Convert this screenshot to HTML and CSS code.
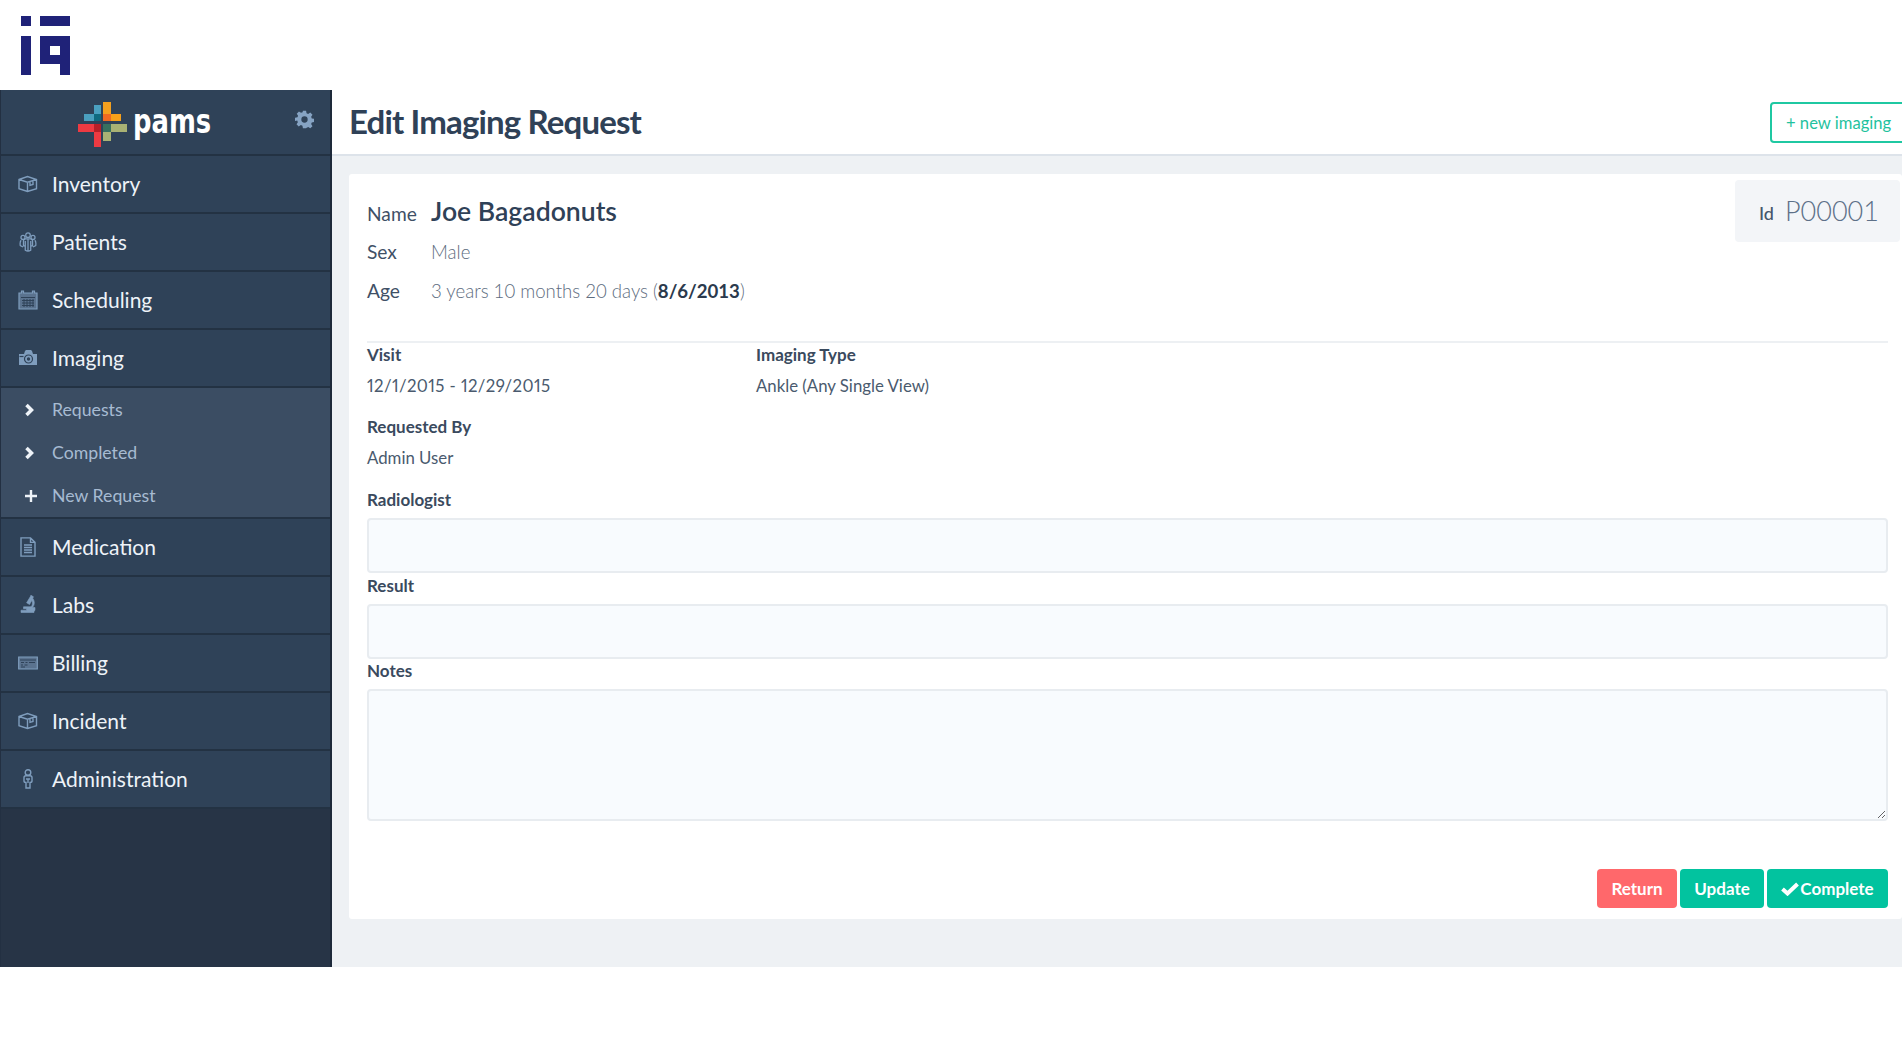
FILE: index.html
```html
<!DOCTYPE html>
<html lang="en">
<head>
<meta charset="utf-8">
<title>Edit Imaging Request</title>
<link rel="stylesheet" href="styles.css">
</head>
<body>
<header class="brandbar">
  <svg class="iq" viewBox="0 0 50 60" width="50" height="60" aria-label="iq"><path fill="#1f2278" d="M0 0h10v10H0zM19 0h30v10H19zM0 20h10v39H0zM19 20h30v39H39V48H19zM29 30v9h10v-9z" fill-rule="evenodd"/></svg>
</header>
<div class="app">
  <aside class="sidebar">
    <div class="sidebrand">
      <svg class="cross" viewBox="0 0 50 46" width="50" height="46">
        <rect x="25" y="0" width="8" height="12" fill="#f3a01f"/><rect x="25" y="12" width="8" height="7" fill="#ef6a22"/><rect x="33" y="12" width="10" height="7" fill="#f6a01a"/>
        <rect x="16" y="3" width="7" height="9" fill="#4aa0c0"/><rect x="6" y="12" width="10" height="7" fill="#4a9fbe"/><rect x="16" y="12" width="7" height="7" fill="#0f6a80"/>
        <rect x="0" y="22" width="16" height="8" fill="#ee3a42"/><rect x="16" y="22" width="7" height="8" fill="#b81f28"/><rect x="16" y="30" width="7" height="15" fill="#ee3a42"/>
        <rect x="25" y="22" width="8" height="8" fill="#37705f"/><rect x="33" y="22" width="16" height="8" fill="#a9b274"/><rect x="25" y="30" width="8" height="9" fill="#a9b274"/>
      </svg>
      <span class="wordmark">pams</span>
      <svg class="gear" viewBox="0 0 24 24" width="19" height="19"><path fill="#86a3c3" fill-rule="evenodd" d="M10 1h4l.6 3.100 2 .8 2.700-1.700 2.800 2.800-1.700 2.600.8 2 3.100.6v4l-3.100.6-.8 2 1.700 2.600-2.800 2.800-2.600-1.700-2 .8L14 23h-4l-.6-3.100-2-.8-2.700 1.700-2.800-2.800 1.700-2.600-.8-2L0 13.800v-4l3.100-.6.8-2L2.200 4.600 5 1.800l2.600 1.700 2-.8zM12 8a4 4 0 1 0 0 8 4 4 0 0 0 0-8z"/></svg>
    </div>
    <nav class="menu">
      <a class="item"><svg class="ico" viewBox="0 0 20 20"><path d="M1 5.500L9.500 2.500l9 3v9.200L9.500 17.500 1 14.700zM1 5.500l8.500 2.700 9-2.700M9.500 8.200v9.300M12 7.400v4l3-.9V6.400"/></svg>Inventory</a>
      <a class="item"><svg class="ico" viewBox="0 0 20 22"><circle cx="10" cy="3.500" r="2.500"/><circle cx="4.500" cy="6" r="2.200"/><circle cx="15.500" cy="6" r="2.200"/><path d="M7 7.500h6l2 1.500v6l-2 .5V20c-2 1.200-4 1.200-6 0v-4.500l-2-.5V9zM2.500 9C1.500 10 1.200 13 1.500 15l3 1.500M17.500 9c1 1 1.300 4 1 6l-3 1.500M10 8v12M7 10v5M13 10v5"/></svg>Patients</a>
      <a class="item"><svg class="ico" viewBox="0 0 20 20"><path class="soft" d="M1 3h2.500V1h2v2h9V1h2v2H19v16H1z"/><path class="cutline" d="M3 7.500h14M4 10.500h12M4 13h12M4 15.500h12M6 9v8M9 9v8M12 9v8M15 9v8"/></svg>Scheduling</a>
      <a class="item"><svg class="ico" viewBox="0 0 20 20"><path class="solid" d="M1 6h5l1-3 1-1h5l1 1 1 3h4v11H1z"/><circle class="cut" cx="10.500" cy="11" r="4"/><circle class="cutfill" cx="10.500" cy="11" r="1.700"/><path class="cut" d="M1.500 8.500h4"/></svg>Imaging</a>
      <div class="submenu">
        <a class="sub"><svg class="subico" viewBox="0 0 12 14"><path d="M2.500 2L7.500 7l-5 5"/></svg>Requests</a>
        <a class="sub"><svg class="subico" viewBox="0 0 12 14"><path d="M2.500 2L7.500 7l-5 5"/></svg>Completed</a>
        <a class="sub"><svg class="subico plus" viewBox="0 0 14 14"><path class="thin" d="M7 1v12M1 7h12"/></svg>New Request</a>
      </div>
      <a class="item"><svg class="ico" viewBox="0 0 20 20"><path d="M3 .9h9.500l4.500 4.500v13.700H3zM12.500 .9v4.500H17M6 8h8M6 10.500h8M6 13h8M6 15.500h8"/></svg>Medication</a>
      <a class="item"><svg class="ico" viewBox="0 0 20 20"><path class="solid heavy" d="M12.500 0l3 1.800-.8 1.400c2.300 3 2 7.200-.3 9.300H17v2.200c0 .8-.4 1.300-1 1.300v1.500H3v-2.300h5.500v-1.500H5.500v-1.900h7.500c1.600-1.500 2-4 .8-6.300l-2.300 4-2.900-1.700 4.800-7.900z"/></svg>Labs</a>
      <a class="item"><svg class="ico" viewBox="0 0 20 20"><path class="soft" d="M.7 4h18.600v12H.7z"/><path class="cutline" d="M2 7h16M3 9.500h3M7.500 9.500h2M11 9.500h6M3 12h2M6.500 12h3M3 14h4"/></svg>Billing</a>
      <a class="item"><svg class="ico" viewBox="0 0 20 20"><path d="M1 5.500L9.500 2.500l9 3v9.200L9.500 17.500 1 14.700zM1 5.500l8.500 2.700 9-2.700M9.500 8.200v9.300M12 7.400v4l3-.9V6.400"/></svg>Incident</a>
      <a class="item"><svg class="ico" viewBox="0 0 20 20"><circle cx="10" cy="3.500" r="2.800"/><path d="M6 8.500c0-1 1-1.800 2-1.800h4c1 0 2 .8 2 1.800V12c0 1-1 1.500-2 1.500V19H8v-5.500c-1 0-2-.5-2-1.500zM8 10h4M10 10v4"/></svg>Administration</a>
    </nav>
  </aside>
  <main class="main">
    <div class="pagehead">
      <h1 class="title">Edit Imaging Request</h1>
      <a class="newbtn">+ new imaging</a>
    </div>
    <section class="card">
      <div class="patient">
        <div class="info">
          <div class="row rowname"><span class="key">Name</span><span class="name">Joe Bagadonuts</span></div>
          <div class="row"><span class="key">Sex</span><span class="val">Male</span></div>
          <div class="row"><span class="key">Age</span><span class="val">3 years 10 months 20 days (<b>8/6/2013</b>)</span></div>
        </div>
        <div class="idbox"><span class="idkey">Id</span><span class="idval">P00001</span></div>
      </div>
      <hr class="rule">
      <div class="pair">
        <div class="static"><div class="label">Visit</div><div class="value date">12/1/2015 - 12/29/2015</div></div>
        <div class="static"><div class="label">Imaging Type</div><div class="value">Ankle (Any Single View)</div></div>
      </div>
      <div class="static second"><div class="label">Requested By</div><div class="value">Admin User</div></div>
      <div class="label radlabel">Radiologist</div>
      <input class="field" type="text">
      <div class="label reslabel">Result</div>
      <input class="field" type="text">
      <div class="label noteslabel">Notes</div>
      <textarea class="area"></textarea>
      <div class="actions">
        <button class="btn red">Return</button>
        <button class="btn green upd">Update</button>
        <button class="btn green cmp"><svg class="check" viewBox="0 0 18 14" width="18" height="14"><path d="M1.500 7L6.500 11.500 16.500 2"/></svg>Complete</button>
      </div>
    </section>
  </main>
</div>
</body>
</html>
```
FILE: styles.css
```css
* { box-sizing: border-box; }
html, body { margin: 0; padding: 0; background: #fff; overflow: hidden; }
body { width: 1902px; height: 1062px; font-family: Lato, "Open Sans", sans-serif; color: #2f4157; }

.brandbar { height: 90px; padding: 16px 0 0 21px; }
.iq { display: block; }

.app { display: flex; height: 877px; }

.sidebar { width: 332px; flex: none; background: #273446; border-right: 2px solid #1e2a3a; border-left: 1px solid #233042; }
.sidebrand { height: 66px; background: #2f4258; border-bottom: 2px solid #233243; display: flex; align-items: flex-start; padding: 12px 0 0 77px; position: relative; }
.wordmark { display: block; font-family: "DejaVu Sans", sans-serif; font-weight: 700; font-size: 30px; line-height: 24px; color: #fff; margin: 7px 0 0 5px; transform: scale(0.86, 1.1); transform-origin: left top; }
.gear { position: absolute; left: 294px; top: 20px; }
.menu { display: flex; flex-direction: column; }
.item { height: 58px; background: #2f4258; border-bottom: 2px solid #233243; display: flex; align-items: center; padding: 0 0 1px 17px; font-size: 21px; color: #eef3f8; }
.ico { width: 20px; height: 20px; margin-right: 14px; flex: none; fill: none; stroke: #7f9dbd; stroke-width: 1.400; }
.ico .solid { fill: #7f9dbd; stroke: none; }
.ico .heavy { stroke: #7f9dbd; stroke-width: .6; }
.ico .soft { fill: rgba(127, 157, 189, .55); stroke: #7f9dbd; stroke-width: 1.200; }
.ico .cut { fill: none; stroke: #2f4258; stroke-width: 1.200; }
.ico .cutfill { fill: #2f4258; stroke: none; }
.ico .cutline { fill: none; stroke: #2f4258; stroke-width: 1; }
.submenu { background: #3b4d63; height: 131px; border-bottom: 2px solid #233243; display: flex; flex-direction: column; }
.sub { height: 43.400px; display: flex; align-items: center; padding-left: 23px; font-size: 17.700px; color: #a7bbd2; }
.subico { width: 12px; height: 14px; margin-right: 16px; flex: none; fill: none; stroke: #eef3f8; stroke-width: 3.500; }
.subico .thin { stroke-width: 2.400; }
.plus { width: 14px; margin-right: 14px; }

.main { flex: 1; min-width: 0; background: #eef1f4; display: flex; flex-direction: column; overflow: hidden; }
.pagehead { height: 66px; background: #fff; border-bottom: 2px solid #dde3ea; display: flex; align-items: center; padding: 0 0 2px 17px; flex: none; position: relative; }
.title { margin: 0; font-size: 33px; font-weight: 700; letter-spacing: -0.85px; color: #2f4157; line-height: 40px; }
.newbtn { position: absolute; left: 1438px; top: 12px; width: 150px; height: 41px; border: 2px solid #1fc8a2; border-radius: 4px; color: #1fc29e; font-size: 16.600px; display: flex; align-items: center; padding-left: 14px; background: #fff; white-space: nowrap; }

.card { margin: 18px 0 0 17px; height: 745px; background: #fff; border-radius: 3px; padding: 6px 14px 0 18px; flex: none; }
.patient { display: flex; justify-content: space-between; align-items: flex-start; height: 161px; }
.info { padding-top: 10px; }
.row { display: flex; align-items: center; height: 39px; font-size: 18.600px; }
.rowname { height: 42px; }
.key { width: 64px; color: #3f5066; flex: none; font-size: 19.200px; }
.rowname .key { padding-top: 4px; }
.val { color: #5d6c7e; font-weight: 300; }
.val b { color: #2b3a4d; font-weight: 700; }
.name { font-size: 26.600px; font-weight: 600; color: #2f4157; }
.idbox { width: 165px; height: 62px; margin-right: -12px; background: #f3f5f8; border-radius: 4px; display: flex; align-items: center; padding-left: 24px; }
.idkey { font-size: 18px; font-weight: 500; color: #45566c; margin-right: 11px; padding-top: 3px; }
.idval { font-size: 27px; font-weight: 300; color: #5d7088; padding-bottom: 2px; }

.rule { border: 0; height: 2px; background: #edf0f3; margin: 0; }
.pair { display: flex; margin-top: 2px; }
.pair .static { width: 389px; }
.label { font-size: 17px; font-weight: 700; line-height: 20px; color: #3a4a5e; }
.value { font-size: 16.800px; line-height: 20px; margin-top: 11px; color: #4a5a6e; }
.date { font-variant-numeric: proportional-nums; letter-spacing: .4px; }
.second { margin-top: 21px; }
.radlabel { margin-top: 22px; }
.reslabel { margin-top: 3px; }
.noteslabel { margin-top: 2px; }
.field, .area { display: block; width: 100%; background: #f8fbfe; border: 2px solid #e8ecf0; border-radius: 4px; margin: 8px 0 0; padding: 0; outline: none; }
.field { height: 55px; }
.area { height: 132px; margin-top: 8px; resize: vertical; }
.actions { display: flex; justify-content: flex-end; gap: 3px; margin-top: 48px; }
.btn { height: 39px; border: 0; border-radius: 4px; color: #fff; font-family: Lato, sans-serif; font-size: 17px; font-weight: 700; padding: 0; display: flex; align-items: center; justify-content: center; }
.red { width: 80px; background: #ff686b; }
.green { background: #02c39f; }
.upd { width: 84px; }
.cmp { width: 121px; }
.check { fill: none; stroke: #fff; stroke-width: 4; margin-right: 1px; }
```
